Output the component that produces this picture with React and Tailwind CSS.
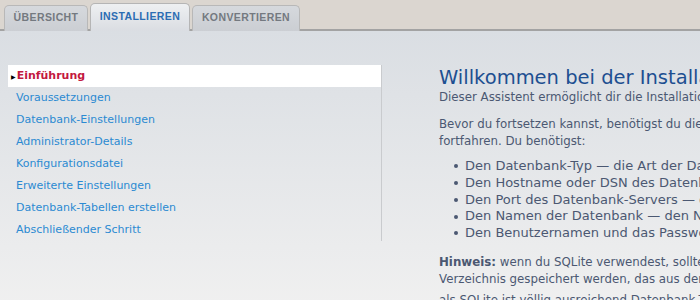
export default function App() {
  const items = [
    "Voraussetzungen",
    "Datenbank-Einstellungen",
    "Administrator-Details",
    "Konfigurationsdatei",
    "Erweiterte Einstellungen",
    "Datenbank-Tabellen erstellen",
    "Abschließender Schritt",
  ];
  const bullets = [
    "Den Datenbank-Typ — die Art der Datenbank, die du verwenden wirst.",
    "Den Hostname oder DSN des Datenbank-Servers — die Adresse des Servers.",
    "Den Port des Datenbank-Servers — der Port, auf dem der Server läuft.",
    "Den Namen der Datenbank — den Namen der Datenbank auf dem Server.",
    "Den Benutzernamen und das Passwort für die Datenbank.",
  ];
  return (
    <div className="w-[700px] h-[300px] overflow-hidden flex flex-col" style={{ fontFamily: '"DejaVu Sans", Verdana, sans-serif' }}>
      <div className="h-[31px] shrink-0 bg-[#dbd6d0] border-b-2 border-[#a3a3a3] flex items-end pl-[4px] gap-[2px]" style={{ fontFamily: '"Liberation Sans", Arial, sans-serif' }}>
        <div className="h-[26px] w-[84px] mb-[-2px] rounded-t-[5px] border border-b-0 border-[#b8b8b8] bg-gradient-to-b from-[#d6d9dd] to-[#cbced3] flex items-center justify-center text-[10.5px] font-bold text-[#747980] tracking-[0.4px] pb-[2px]">ÜBERSICHT</div>
        <div className="h-[28px] w-[100px] mb-[-2px] rounded-t-[5px] border border-b-0 border-[#b5b5b5] bg-gradient-to-b from-[#eef0f2] to-[#dadde2] flex items-center justify-center text-[10.5px] font-bold text-[#2b6db3] tracking-[0.4px] pb-[2px] relative z-10">INSTALLIEREN</div>
        <div className="h-[26px] w-[108px] mb-[-2px] rounded-t-[5px] border border-b-0 border-[#b8b8b8] bg-gradient-to-b from-[#d6d9dd] to-[#cbced3] flex items-center justify-center text-[10.5px] font-bold text-[#747980] tracking-[0.4px] pb-[2px]">KONVERTIEREN</div>
      </div>
      <div className="flex-1 bg-gradient-to-b from-[#dadee3] to-[#f0f0f0] flex pt-[34px]">
        <div className="w-[374px] ml-[8px] shrink-0 border-r border-[#c9cbce] h-[176px]">
          <div className="h-[22px] bg-white flex items-center pl-[3px] text-[11px] font-bold text-[#c31840]">
            <span className="text-[6px] text-black mr-[1px]">▶</span>Einführung
          </div>
          {items.map((t) => (
            <div key={t} className="h-[22px] pt-[1px] flex items-center pl-[8px] text-[11px] text-[#2b8ad2]">{t}</div>
          ))}
        </div>
        <div className="ml-[57px] flex-1 min-w-0 whitespace-nowrap text-[11.8px] text-[#4b5872] leading-[17px]">
          <div className="text-[19.5px] text-[#1d4f91] leading-[24px] mt-[1px]">Willkommen bei der Installation</div>
          <div className="mt-[-1px]">Dieser Assistent ermöglicht dir die Installation des Forums auf deinem Server.</div>
          <div className="mt-[10px]">Bevor du fortsetzen kannst, benötigst du die folgenden Informationen, um</div>
          <div>fortfahren. Du benötigst:</div>
          <ul className="mt-[8px] ml-[16px] text-[13px] leading-[16.75px]">
            {bullets.map((b) => (
              <li key={b} className="flex items-center">
                <span className="w-[4px] h-[4px] rounded-full bg-[#4b5872] mr-[7px] shrink-0 ml-[-1px]"></span>
                {b}
              </li>
            ))}
          </ul>
          <div className="mt-[12px]"><b>Hinweis:</b> wenn du SQLite verwendest, solltest du den vollständigen Pfad</div>
          <div>Verzeichnis gespeichert werden, das aus dem Internet nicht erreichbar ist.</div>
          <div className="mt-[4px]">als SQLite ist völlig ausreichend Datenbank-Typ</div>
        </div>
      </div>
    </div>
  );
}
